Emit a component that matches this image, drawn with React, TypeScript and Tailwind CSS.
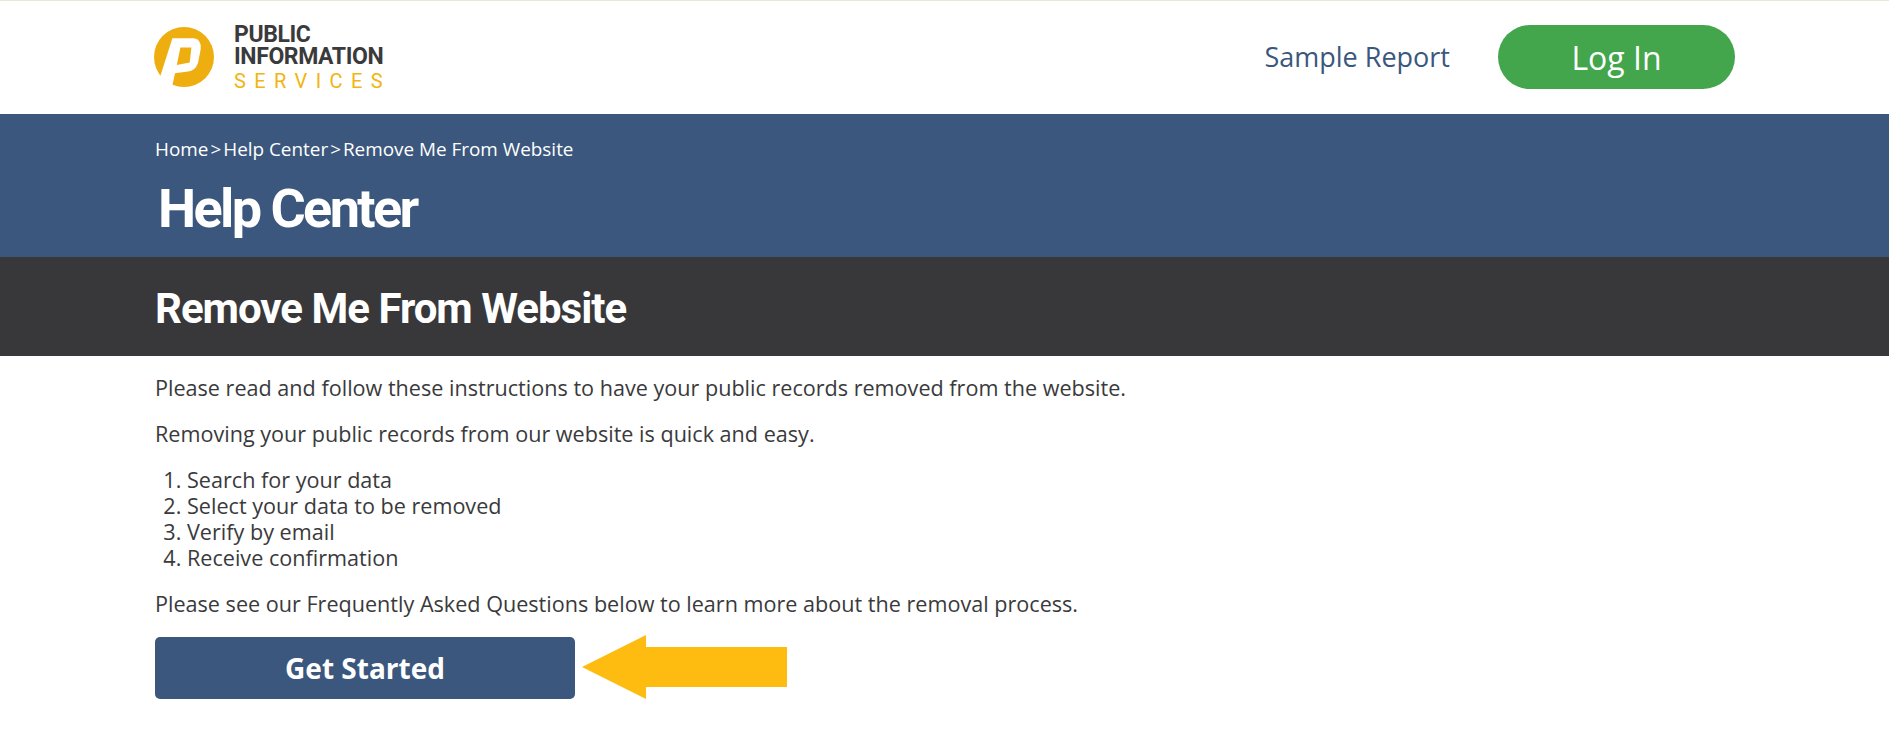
const openSans = "font-['Open_Sans',sans-serif]";

function Logo() {
  return (
    <a href="#" className="flex items-center gap-[20px]">
      <svg width="60" height="60" viewBox="0 0 60 60" className="shrink-0">
        <circle cx="30" cy="30" r="30" fill="#eeae10" />
        <path d="M18.4 11.3 L40 11.3 Q47.5 12 46.7 22.3 L44 36 Q41 44 34 44.6 L21 46.3 L18 60 L6 50 Z" fill="#fff" />
        <path d="M26.4 20.6 L37.4 20.6 L35.7 35.6 L22.8 38 Z" fill="#eeae10" />
      </svg>
      <div className="mt-[2px] flex flex-col font-['Roboto',sans-serif]">
        <span className="text-[23px] leading-[22px] font-bold tracking-[-0.4px] text-[#3a3a3c]">PUBLIC</span>
        <span className="text-[23px] leading-[22px] font-bold tracking-[-0.4px] text-[#3a3a3c]">INFORMATION</span>
        <span className="mt-[2px] text-[20px] leading-[22px] font-normal tracking-[8.4px] text-[#f2b411]">SERVICES</span>
      </div>
    </a>
  );
}

export default function App() {
  return (
    <div className={`min-h-[745px] bg-white text-[#3a3a3c] ${openSans}`}>
      {/* Header */}
      <header className="flex h-[114px] items-center justify-between border-t border-[#e8e8d6] px-[154px] pb-[1px]">
        <Logo />
        <nav className="flex items-center gap-[48px]">
          <a href="#" className="text-[27px] text-[#3b577d]">Sample Report</a>
          <a href="#" className="flex h-[64px] w-[237px] items-center justify-center rounded-[32px] bg-[#43a54c] pt-[2px] text-[32px] text-white">
            Log In
          </a>
        </nav>
      </header>

      {/* Page title */}
      <section className="h-[143px] bg-[#3b577d] pt-[22px] pl-[155px] text-white">
        <div className="text-[18.9px] leading-[26px]">
          Home<span className="mx-[2px]">&gt;</span>Help Center<span className="mx-[2px]">&gt;</span>Remove Me From Website
        </div>
        <h1 className="mt-[17px] ml-[3px] font-['Roboto',sans-serif] text-[54px] leading-[60px] font-bold tracking-[-2.6px]">
          Help Center
        </h1>
      </section>

      <section className="flex h-[99px] items-center bg-[#38383a] pt-[3px] pl-[155px]">
        <h2 className="font-['Roboto',sans-serif] text-[42px] font-bold tracking-[-1px] text-white">Remove Me From Website</h2>
      </section>

      {/* Instructions */}
      <main className="pt-[19px] pl-[155px] text-[21.6px] leading-[26px]">
        <p>Please read and follow these instructions to have your public records removed from the website.</p>
        <p className="mt-[20px]">Removing your public records from our website is quick and easy.</p>
        <ol className="mt-[20px] list-decimal pl-[32px]">
          <li>Search for your data</li>
          <li>Select your data to be removed</li>
          <li>Verify by email</li>
          <li>Receive confirmation</li>
        </ol>
        <p className="mt-[20px]">Please see our Frequently Asked Questions below to learn more about the removal process.</p>
        <div className="mt-[20px] flex items-start gap-[7px]">
          <a href="#" className="flex h-[62px] w-[420px] items-center justify-center rounded-[5px] bg-[#3b577d] text-[28px] font-bold text-white">
            Get Started
          </a>
          <svg width="205" height="64" viewBox="0 0 205 64" className="-mt-[2px] shrink-0">
            <path d="M0 32 L64 0 L64 12 L205 12 L205 52 L64 52 L64 64 Z" fill="#febc11" />
          </svg>
        </div>
      </main>
    </div>
  );
}
